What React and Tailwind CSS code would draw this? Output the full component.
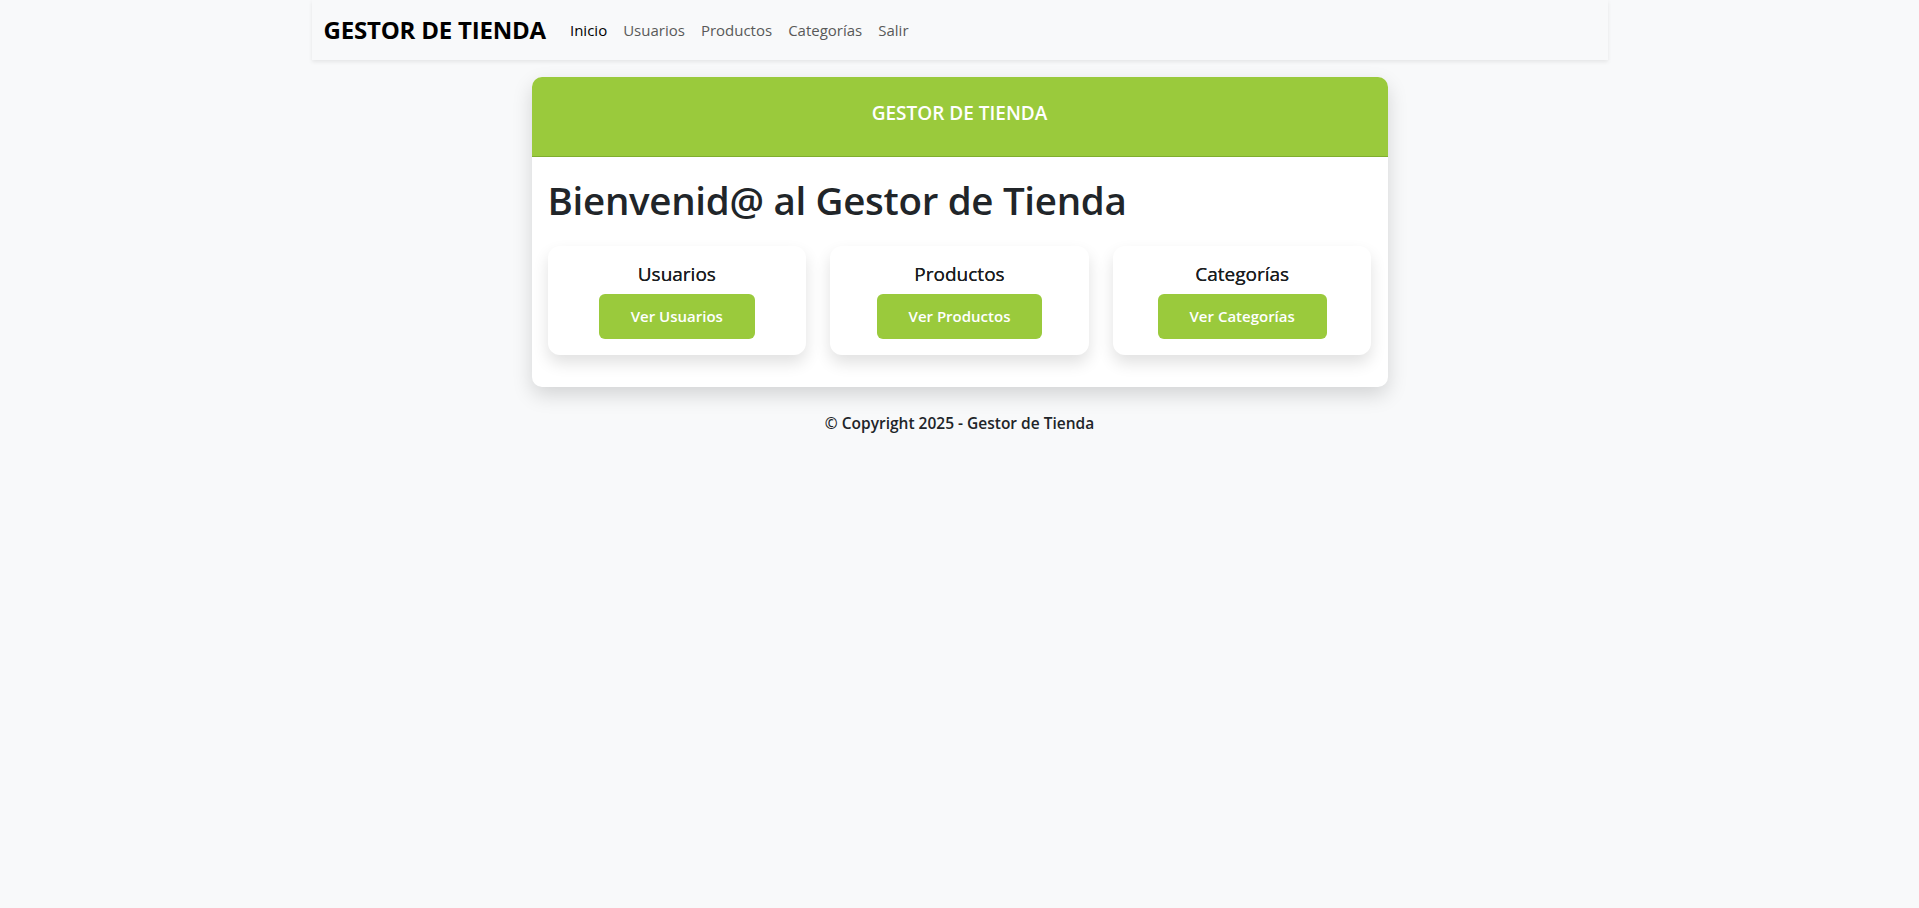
import React from "react";

function MiniCard({ title, label }) {
  return (
    <div className="bg-white rounded-xl shadow-[0_8px_16px_rgba(0,0,0,0.12)] p-4 flex flex-col items-center">
      <h5 className="text-[19px] leading-[24px] text-[#1a1d20] mb-2 [text-shadow:0_0_0.4px_#1a1d20]">{title}</h5>
      <button className="h-[45px] px-8 rounded-md bg-[#9aca3c] text-white text-[15px] font-semibold">
        {label}
      </button>
    </div>
  );
}

export default function App() {
  return (
    <div
      className="min-h-screen bg-[#f8f9fa] text-[#212529]"
      style={{ fontFamily: '"Open Sans", "Noto Sans", sans-serif' }}
    >
      <nav className="mx-auto w-[1296px] h-[60px] bg-[#f8f9fa] shadow-[0_2px_4px_rgba(0,0,0,0.08)] flex items-center px-3">
        <span className="text-[24px] font-bold text-black mr-4 tracking-[-0.2px]">GESTOR DE TIENDA</span>
        <div className="flex items-center text-[15px]">
          <a className="px-2 text-black">Inicio</a>
          <a className="px-2 text-[#595959]">Usuarios</a>
          <a className="px-2 text-[#595959]">Productos</a>
          <a className="px-2 text-[#595959]">Categorías</a>
          <a className="px-2 text-[#595959]">Salir</a>
        </div>
      </nav>

      <div className="mx-auto w-[856px] mt-[17px] bg-white rounded-[10px] shadow-[0_8px_20px_rgba(0,0,0,0.15)] overflow-hidden">
        <div className="h-[80px] bg-[#9aca3c] border-b border-[#7fae2e] flex items-center justify-center pb-[7px] text-white text-[19px] font-semibold">
          GESTOR DE TIENDA
        </div>
        <div className="px-4 pt-[19px] pb-4">
          <h1 className="text-[38.5px] font-semibold leading-[48px] text-[#212529] mb-[22px] tracking-[-0.3px]">
            Bienvenid@ al Gestor de Tienda
          </h1>
          <div className="grid grid-cols-3 gap-6 mb-4">
            <MiniCard title="Usuarios" label="Ver Usuarios" />
            <MiniCard title="Productos" label="Ver Productos" />
            <MiniCard title="Categorías" label="Ver Categorías" />
          </div>
        </div>
      </div>

      <footer className="text-center mt-6 text-[15.5px] font-semibold leading-6 text-[#212529]">
        © Copyright 2025 - Gestor de Tienda
      </footer>
    </div>
  );
}
